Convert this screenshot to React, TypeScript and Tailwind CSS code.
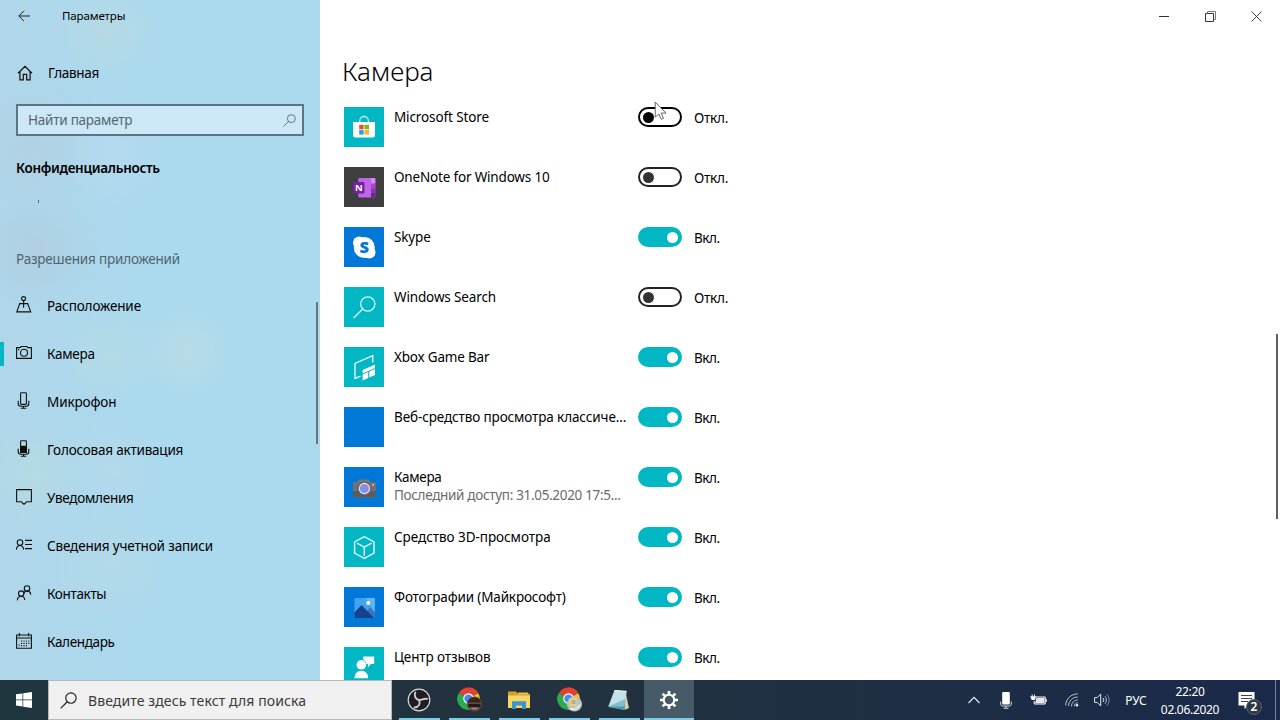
import type { ReactNode } from "react";

const HomeIcon = () => (
  <svg width="16" height="16" viewBox="0 0 16 16" fill="none" stroke="#111" strokeWidth="1.2">
    <path d="M1 8.2 8 1.4l7 6.8M2.9 6.6v8.2h3.4V9.4h3.4v5.4h3.4V6.6" />
  </svg>
);

const SearchIcon = ({ size = 13, color = "#4c5d66", width = 1 }: { size?: number; color?: string; width?: number }) => (
  <svg width={size} height={size} viewBox="0 0 16 16" fill="none" stroke={color} strokeWidth={width}>
    <circle cx="10.3" cy="5.7" r="4.9" />
    <path d="M6.8 9.2.6 15.4" />
  </svg>
);

const LocationIcon = () => (
  <svg width="16" height="17" viewBox="0 0 16 17" fill="none" stroke="#111" strokeWidth="1.1">
    <circle cx="7.6" cy="2.6" r="2" />
    <path d="M7.6 4.6v7.200M5.200 7.600H3.700L.8 15.900h13.900l-3-8.300h-1.600M4.500 7.600h6.200" />
  </svg>
);

const CameraIcon = () => (
  <svg width="16" height="16" viewBox="0 0 16 16" fill="none" stroke="#111" strokeWidth="1.1">
    <path d="M.6 2.600h3.500L5.200 1.500h5.600l1.100 1.100h3.500v10.800H.6z" />
    <circle cx="8" cy="7.800" r="3.500" />
    <path d="M2 4.600h1.200" />
  </svg>
);

const MicIcon = ({ filled = false }: { filled?: boolean }) => (
  <svg width="16" height="17" viewBox="0 0 16 17" fill="none" stroke="#111" strokeWidth="1.1">
    <rect x="4.600" y=".8" width="5.800" height="11.600" rx=".8" />
    {filled && <path d="M4.600 6.400h5.800v6H4.600z" fill="#111" />}
    <path d="M2.200 8.800v2.800c0 1.700 1 2.700 2.700 2.700h5.200c1.700 0 2.700-1 2.700-2.700V8.800M7.500 14.300v2M4.800 16.300h5.400" />
  </svg>
);

const NoticeIcon = () => (
  <svg width="16" height="16" viewBox="0 0 16 16" fill="none" stroke="#111" strokeWidth="1.1">
    <path d="M.6.6h14.800v12.200h-4.600L8 15.200l-2.800-2.400H.6z" />
  </svg>
);

const AccountIcon = () => (
  <svg width="16" height="12" viewBox="0 0 16 12" fill="none" stroke="#111" strokeWidth="1.1">
    <circle cx="4" cy="3.600" r="2.800" />
    <path d="M.4 10.600C.6 8 2 6.500 4 6.500s3.400 1.500 3.600 4.100M9 1.400h7M9 5.500h7M9 9.600h7" />
  </svg>
);

const ContactsIcon = () => (
  <svg width="16" height="16" viewBox="0 0 16 16" fill="none" stroke="#111" strokeWidth="1.1">
    <circle cx="11" cy="3.400" r="2.700" />
    <path d="M7.600 8.600C8.200 7 9.400 6.100 11 6.100c2.200 0 3.600 1.400 3.800 3.700" />
    <circle cx="5.200" cy="8.600" r="2.700" />
    <path d="M1.300 15.400c.2-2.700 1.700-4.100 3.900-4.100 2 0 3.200 1.300 3.600 3.700" />
  </svg>
);

const CalendarIcon = () => (
  <svg width="16" height="16" viewBox="0 0 16 16" fill="none" stroke="#111" strokeWidth="1.1">
    <path d="M.6 2h14.800v13.200H.6zM.6 5h14.800M3.400 0v3.200M12.600 0v3.200" />
    <path d="M3.200 11.200v2.600M5.600 7.400v6.400M8 7.400v6.400M10.400 7.400v6.400M12.800 7.400v4" strokeDasharray="1.2 1.1" />
  </svg>
);

type NavItem = { label: string; icon: ReactNode; active?: boolean; tracking: string };

const nav: NavItem[] = [
  { label: "Расположение", icon: <LocationIcon />, tracking: "tracking-[-0.12px]" },
  { label: "Камера", icon: <CameraIcon />, active: true, tracking: "tracking-[-0.28px]" },
  { label: "Микрофон", icon: <MicIcon />, tracking: "tracking-[-0.11px]" },
  { label: "Голосовая активация", icon: <MicIcon filled />, tracking: "tracking-[-0.21px]" },
  { label: "Уведомления", icon: <NoticeIcon />, tracking: "tracking-[-0.26px]" },
  { label: "Сведения учетной записи", icon: <AccountIcon />, tracking: "tracking-[-0.15px]" },
  { label: "Контакты", icon: <ContactsIcon />, tracking: "tracking-[-0.34px]" },
  { label: "Календарь", icon: <CalendarIcon />, tracking: "tracking-[-0.35px]" },
];

const StoreTile = () => (
  <svg width="40" height="40" viewBox="0 0 40 40">
    <path d="M15.800 16v-2.200a4.200 4.200 0 0 1 8.600 0V16" fill="none" stroke="#b5eaef" strokeWidth="1.300" />
    <path d="M9 15h22v13.600a2 2 0 0 1-2 2H11a2 2 0 0 1-2-2z" fill="#fff" />
    <path d="M15.200 17.800h4.500v4.500h-4.500z" fill="#e8532a" />
    <path d="M20.500 17.800H25v4.500h-4.500z" fill="#7fb51c" />
    <path d="M15.200 23.100h4.500v4.500h-4.500z" fill="#1ba1e8" />
    <path d="M20.500 23.100H25v4.500h-4.500z" fill="#f7b61b" />
  </svg>
);

const OneNoteTile = () => (
  <svg width="40" height="40" viewBox="0 0 40 40">
    <rect x="14.300" y="11" width="17" height="19.500" rx="1.200" fill="#c065e6" />
    <path d="M27 11h3.300a1 1 0 0 1 1 1v4.500H27z" fill="#d68af0" />
    <path d="M27 16.500h4.300v5H27z" fill="#a444cf" />
    <path d="M27 21.500h4.300v4.500H27z" fill="#8b35b8" />
    <path d="M27 26h4.300v3.500a1 1 0 0 1-1 1H27z" fill="#6c2499" />
    <rect x="9" y="15" width="11.500" height="11.500" rx="1" fill="#7520a5" />
    <text x="14.800" y="24.300" textAnchor="middle" fontSize="9.500" fontWeight="700" fontFamily="Open Sans, sans-serif" fill="#fff">N</text>
  </svg>
);

const SkypeTile = () => (
  <svg width="40" height="40" viewBox="0 0 40 40">
    <circle cx="15.200" cy="15.700" r="6.200" fill="#fff" />
    <circle cx="25.300" cy="25.300" r="6.200" fill="#fff" />
    <circle cx="20.300" cy="20.500" r="10.500" fill="#fff" />
    <text x="20.300" y="26.300" textAnchor="middle" fontSize="16.500" fontWeight="800" fontFamily="Open Sans, sans-serif" fill="#0078d7">S</text>
  </svg>
);

const FindTile = () => (
  <svg width="40" height="40" viewBox="0 0 40 40" fill="none" stroke="#d9f5f7" strokeWidth="1.300">
    <circle cx="23.800" cy="17" r="7.100" />
    <path d="M18.700 22 9.600 31" />
  </svg>
);

const GameBarTile = () => (
  <svg width="40" height="40" viewBox="0 0 40 40">
    <path d="M16.500 29.200 11 31.500V16.400L28.800 8.600v6.800" fill="none" stroke="#e4f8fa" strokeWidth="1.400" />
    <path d="M18.600 23 31 17.600v3.400l-12.400 5.400z" fill="#fff" />
    <path d="M18.600 27.400l5.600-2.400v6l-5.600 2.400zM25.300 24.600l5.700-2.500v6l-5.700 2.500z" fill="#fff" />
  </svg>
);

const CameraTile = () => (
  <svg width="40" height="40" viewBox="0 0 40 40">
    <path d="M15 12.500h10l1.500 3h-13z" fill="#74767b" />
    <rect x="9" y="15" width="23" height="15.500" rx="1.200" fill="#707277" />
    <path d="M9 24h23v5.300a1.200 1.200 0 0 1-1.200 1.200H10.200A1.200 1.200 0 0 1 9 29.300z" fill="#5a5c61" />
    <circle cx="20.400" cy="21.500" r="7" fill="#606267" />
    <circle cx="20.400" cy="21.500" r="5.700" fill="#e5e3ee" />
    <circle cx="20.400" cy="21.500" r="4.500" fill="#9a83d8" />
    <circle cx="18.900" cy="22.500" r="2.400" fill="#58a5ea" />
    <path d="M28.200 17h1.600v1.500h-1.600z" fill="#d9d9dc" />
  </svg>
);

const CubeTile = () => (
  <svg width="40" height="40" viewBox="0 0 40 40" fill="none" stroke="#d9f5f7" strokeWidth="1.500" strokeLinejoin="round">
    <path d="m20.300 9.600 9.700 5.200v11.400l-9.700 5.200-9.700-5.200V14.800zM13 16.200l7.300 3.900v8.700M20.300 20.100l7.300-3.900" />
  </svg>
);

const PhotosTile = () => (
  <svg width="40" height="40" viewBox="0 0 40 40">
    <path d="M10.500 11h20.300v20H10.500z" fill="#41a4ee" />
    <path d="M22 11h8.800v14z" fill="#5eb6f5" />
    <path d="m20.500 27 5.500-6.500 4.800 5V31H20.500z" fill="#3874c4" />
    <path d="M10.500 25.500 17.500 18 30 31H10.500z" fill="#17418c" />
    <circle cx="24.200" cy="16" r="2" fill="#fff" />
  </svg>
);

const FeedbackTile = () => (
  <svg width="40" height="40" viewBox="0 0 40 40" fill="#fff">
    <circle cx="17.300" cy="17.800" r="4.800" />
    <path d="M19.300 9.500h10.900v7.600h-3.300l-3 3.200v-3.200h-1.500c-.4-2.100-1.500-3.500-3.100-4.300z" />
    <path d="M10.500 31.200c.3-4.700 2.500-7.500 6.800-7.500s6.600 2.800 6.900 7.500z" />
  </svg>
);

type AppRow = { name: string; on: boolean; tile: string; icon?: ReactNode; sub?: string; hover?: boolean; tracking: string };

const apps: AppRow[] = [
  { name: "Microsoft Store", on: false, tile: "bg-[#00b7c3]", icon: <StoreTile />, hover: true, tracking: "tracking-[-0.12px]" },
  { name: "OneNote for Windows 10", on: false, tile: "bg-[#3f3f41]", icon: <OneNoteTile />, tracking: "tracking-[-0.18px]" },
  { name: "Skype", on: true, tile: "bg-[#0078d7]", icon: <SkypeTile />, tracking: "tracking-[-0.15px]" },
  { name: "Windows Search", on: false, tile: "bg-[#00b7c3]", icon: <FindTile />, tracking: "tracking-[-0.14px]" },
  { name: "Xbox Game Bar", on: true, tile: "bg-[#00b7c3]", icon: <GameBarTile />, tracking: "tracking-[-0.19px]" },
  { name: "Веб-средство просмотра классиче...", on: true, tile: "bg-[#0078d7]", tracking: "tracking-[-0.12px]" },
  { name: "Камера", on: true, tile: "bg-[#0078d7]", icon: <CameraTile />, sub: "Последний доступ: 31.05.2020 17:5...", tracking: "tracking-[-0.3px]" },
  { name: "Средство 3D-просмотра", on: true, tile: "bg-[#00b7c3]", icon: <CubeTile />, tracking: "tracking-[-0.05px]" },
  { name: "Фотографии (Майкрософт)", on: true, tile: "bg-[#0078d7]", icon: <PhotosTile />, tracking: "tracking-[-0.15px]" },
  { name: "Центр отзывов", on: true, tile: "bg-[#00b7c3]", icon: <FeedbackTile />, tracking: "tracking-[-0.12px]" },
];

const Toggle = ({ on, hover }: { on: boolean; hover?: boolean }) =>
  on ? (
    <div className="flex h-5 w-11 items-center justify-end rounded-full bg-[#00b7c3] pr-1">
      <div className="size-[11px] rounded-full bg-white" />
    </div>
  ) : (
    <div className={`flex h-5 w-11 items-center rounded-full border-2 pl-[3px] ${hover ? "border-black" : "border-[#222]"}`}>
      <div className={`size-[11px] rounded-full ${hover ? "bg-black" : "bg-[#333]"}`} />
    </div>
  );

const Sidebar = () => (
  <aside className="flex w-80 flex-col bg-[#abd9ee] bg-[radial-gradient(circle_at_110px_30px,#bddbde99_0,#bddbde00_50px),radial-gradient(circle_at_187px_352px,#bedde3b3_0,#bedde300_48px),radial-gradient(circle_at_112px_355px,#b8dde099_0,#b8dde000_50px),radial-gradient(circle_at_38px_250px,#b0c8d880_0,#b0c8d800_60px),radial-gradient(circle_at_35px_150px,#b3cddd80_0,#b3cddd00_65px),radial-gradient(circle_at_115px_150px,#badbf099_0,#badbf000_60px),radial-gradient(circle_at_35px_475px,#b9dddf99_0,#b9dddf00_50px),radial-gradient(circle_at_115px_565px,#b7dbe599_0,#b7dbe500_60px),radial-gradient(circle_at_115px_470px,#b9dbe999_0,#b9dbe900_50px),linear-gradient(to_right,#b0d6e9_0,#abd9ee_45%)]">
    <div className="flex h-8 items-center pl-[18px]">
      <svg width="12" height="12" viewBox="0 0 12 12" fill="none" stroke="#222" strokeWidth="1">
        <path d="M12 6H.8M6 .8.8 6 6 11.200" />
      </svg>
      <span className="ml-8 text-[11.5px] leading-4 tracking-[-0.12px]">Параметры</span>
    </div>
    <div className="mt-[25px] flex h-8 items-center pl-[17px]">
      <HomeIcon />
      <span className="ml-[15px] text-[13.5px] leading-5 tracking-[-0.3px]">Главная</span>
    </div>
    <div className="mx-4 mt-[15px] flex h-8 w-72 items-center justify-between border-2 border-[#5b7582] bg-[#cce8f7] pr-1.5 pl-[10px]">
      <span className="text-[13.5px] leading-5 tracking-[-0.24px] text-[#546670]">Найти параметр</span>
      <SearchIcon />
    </div>
    <h2 className="mt-[22px] ml-4 text-[13.5px] leading-5 font-semibold tracking-[-0.3px]">Конфиденциальность</h2>
    <div className="mt-[22px] ml-[38px] h-[3px] w-px bg-[#4d6b80]" />
    <h3 className="mt-[46px] ml-4 text-[13.5px] leading-5 tracking-[-0.19px] text-[#50656f]">Разрешения приложений</h3>
    <div className="mt-[13px] flex">
      <nav className="flex-1">
        {nav.map((n) => (
          <div key={n.label} className="flex h-12 items-center">
            <div className={`h-6 w-1 ${n.active ? "bg-[#00b7c3]" : ""}`} />
            <div className="ml-3 flex w-4 justify-center pb-[3px]">{n.icon}</div>
            <span className={`ml-[15px] text-[13.5px] leading-5 whitespace-nowrap ${n.tracking}`}>{n.label}</span>
          </div>
        ))}
      </nav>
      <div className="mt-5 mr-0.5 h-[142px] w-0.5 bg-[#66767f]" />
    </div>
  </aside>
);

const WindowButtons = () => (
  <div className="flex h-8 shrink-0 justify-end pr-px">
    <div className="flex w-[46px] items-center justify-center">
      <div className="h-px w-2.5 bg-[#333]" />
    </div>
    <div className="flex w-[46px] items-center justify-center">
      <svg width="11" height="11" viewBox="0 0 11 11" fill="none" stroke="#333">
        <path d="M.5 2.500h8v8h-8z" />
        <path d="M2.500 2.500v-2h8v8h-2" stroke="#777" />
      </svg>
    </div>
    <div className="flex w-[46px] items-center justify-center">
      <svg width="11" height="11" viewBox="0 0 11 11" fill="none" stroke="#444">
        <path d="m.5.500 10 10m0-10-10 10" />
      </svg>
    </div>
  </div>
);

const Main = () => (
  <main className="flex min-w-0 flex-1 flex-col bg-white">
    <WindowButtons />
    <div className="flex flex-1 justify-between">
      <div className="pl-6">
        <h1 className="mt-[21px] -ml-0.5 text-[26px] leading-9 font-light">Камера</h1>
        <ul className="mt-[18px]">
          {apps.map((a) => (
            <li key={a.name} className="flex h-[60px] items-start">
              <div className={`size-10 ${a.tile}`}>{a.icon}</div>
              <div className="ml-2.5 w-[244px] whitespace-nowrap">
                <div className={`text-[13.5px] leading-5 ${a.tracking}`}>{a.name}</div>
                {a.sub && <div className="-mt-0.5 text-[13.5px] leading-5 tracking-[-0.32px] text-[#6b6b6b]">{a.sub}</div>}
              </div>
              <Toggle on={a.on} hover={a.hover} />
              <span className={`ml-3 pt-px text-[13.5px] leading-5 ${a.on ? "tracking-[-0.45px]" : "tracking-[-0.24px]"}`}>{a.on ? "Вкл." : "Откл."}</span>
            </li>
          ))}
        </ul>
      </div>
      <div className="mt-[302px] mr-0.5 h-[185px] w-0.5 bg-[#606060]" />
    </div>
  </main>
);

const Chrome = ({ children }: { children: ReactNode }) => (
  <svg width="26" height="28" viewBox="0 0 26 28" overflow="visible">
    <path d="M12.500 12.500 2.800 7A11.200 11.200 0 0 1 22.300 7.200z" fill="#e34133" />
    <path d="M12.500 12.500 22.300 7.200A11.200 11.200 0 0 1 12.500 24z" fill="#fbc116" />
    <path d="M12.500 12.500 12.500 24A11.200 11.200 0 0 1 2.800 7z" fill="#2da94f" />
    <path d="M12.500 7.200h9.800a11 11 0 0 0-9.800-5.800z" fill="#e34133" />
    <circle cx="12.500" cy="12.600" r="5.300" fill="#fff" />
    <circle cx="12.500" cy="12.600" r="4.200" fill="#4688f1" />
    {children}
  </svg>
);

const ObsIcon = () => (
  <svg width="24" height="24" viewBox="0 0 24 24">
    <circle cx="12" cy="12" r="10.800" fill="#1f1d22" stroke="#d5d7d9" strokeWidth="1.200" />
    <g fill="none" stroke="#c9cbce" strokeWidth="1.900" strokeLinecap="round">
      <path d="M8.300 4.500c-1.400 3.600.2 6.600 3.700 7.500" />
      <path d="M20.300 10.900c-3.800-.600-6.500 1.300-8.300 1.100" />
      <path d="M7.500 19.500c4.400-.300 6.100-3.600 4.500-7.500" />
    </g>
  </svg>
);

const FolderIcon = () => (
  <svg width="24" height="20" viewBox="0 0 24 20">
    <path d="M1 1.500h8l1.800 2H22a1 1 0 0 1 1 1V8H1z" fill="#d99f24" />
    <path d="M1 5.500h22V18H1z" fill="#f9d566" />
    <path d="M11 2.500h10v2H11z" fill="#e9bd50" />
    <path d="M5 11.200h14V19h-4v-3.500H9V19H5z" fill="#3b93cf" />
  </svg>
);

const NotepadIcon = () => (
  <svg width="24" height="24" viewBox="0 0 24 24">
    <path d="M18.500 3.500 22 20l-4.500 2z" fill="#d8cda6" />
    <path d="m7.500 2.500 12 .8-2.200 18.600L1 18.700z" fill="#81bdca" />
    <path d="m7.500 2.500 12 .8-.9 7.700L2 18z" fill="#c2e2e8" />
    <path d="M1 18.700 17.300 21.900l.4-3.500z" fill="#4f97a8" />
    <path d="m7.500 2.500 12 .8" stroke="#eff5f5" strokeWidth="1.200" />
  </svg>
);

const GearIcon = () => (
  <svg width="20" height="20" viewBox="0 0 20 20" fill="none" stroke="#fff">
    <circle cx="10" cy="10" r="5.300" strokeWidth="2.100" />
    <path d="M10 4.200V1M10 19v-3.200M4.200 10H1M19 10h-3.200M5.900 5.900 3.600 3.600M16.400 16.400l-2.300-2.300M5.900 14.100l-2.300 2.300M16.400 3.600l-2.300 2.300" strokeWidth="2.700" />
  </svg>
);

const taskApps: { id: string; icon: ReactNode; active?: boolean }[] = [
  { id: "obs", icon: <ObsIcon /> },
  {
    id: "chrome-1",
    icon: (
      <Chrome>
        <circle cx="18.500" cy="18" r="7.600" fill="#62473a" />
        <path d="M11.500 16.500a7.500 7.500 0 0 1 14 0z" fill="#35271f" />
        <path d="M12.500 18h12v3h-12z" fill="#211c1b" />
        <path d="M15.500 22.500h6" stroke="#b58e72" strokeWidth="1.500" />
      </Chrome>
    ),
  },
  { id: "explorer", icon: <FolderIcon /> },
  {
    id: "chrome-2",
    icon: (
      <Chrome>
        <circle cx="18.500" cy="18" r="7.600" fill="#b9c0c3" />
        <path d="M13.500 12h7v8h-7z" fill="#e7d271" />
        <path d="M15.500 14h4v4h-4z" fill="#a8adb0" />
        <path d="M14 22.500c4 1.500 8 0 10-4" stroke="#e2e6e8" strokeWidth="2" fill="none" />
      </Chrome>
    ),
  },
  { id: "notepad", icon: <NotepadIcon /> },
  { id: "settings", icon: <GearIcon />, active: true },
];

const Taskbar = () => (
  <footer className="flex h-10 bg-linear-to-r from-[#20363f] via-[#22323f] via-45% to-[#1a294a] text-white">
    <div className="flex w-12 items-center justify-center">
      <svg width="16" height="16" viewBox="0 0 16 16" fill="#fff">
        <path d="M0 2.300 6.500 1.400v6.200H0zM7.200 1.300 16 0v7.600H7.200zM0 8.300h6.500v6.200L0 13.600zM7.200 8.300H16V16l-8.800-1.300z" />
      </svg>
    </div>
    <div className="flex w-[344px] items-center border border-[#b5b5b5] bg-[#f0f0f0] pl-[11px]">
      <SearchIcon size={17} color="#222" width={1.1} />
      <span className="ml-[11px] pt-px text-[14px] tracking-[0.1px] text-[#3b3b3b]">Введите здесь текст для поиска</span>
    </div>
    <div className="ml-0.5 flex">
      {taskApps.map((t) => (
        <div key={t.id} className={`flex w-[50px] flex-col items-center ${t.active ? "bg-[#465b67]" : ""}`}>
          <div className="flex h-[37.500px] items-center justify-center pt-0.5">{t.icon}</div>
          <div className={`h-[2.500px] bg-[#76cfe6] ${t.active ? "w-full" : "w-[41px]"}`} />
        </div>
      ))}
    </div>
    <div className="ml-auto flex items-center">
      <div className="flex w-8 justify-center">
        <svg width="12" height="8" viewBox="0 0 12 8" fill="none" stroke="#e6e9ee" strokeWidth="1.200"><path d="M.5 7 6 1.400 11.500 7" /></svg>
      </div>
      <div className="flex w-8 justify-center">
        <svg width="12" height="17" viewBox="0 0 12 17" fill="#fff"><rect x="2.200" y="0" width="7.600" height="12.500" rx="1" /><path d="M.7 9.500v2.500c0 1.200.8 2 2 2h6.600c1.200 0 2-.8 2-2V9.500M6 14v2M3.500 16.300h5" fill="none" stroke="#fff" strokeWidth=".8" /></svg>
      </div>
      <div className="flex w-[33px] justify-center pb-0.5">
        <svg width="17" height="11" viewBox="0 0 17 11"><path d="M6 3h9.200v7H4.200V7" fill="none" stroke="#fff" /><path d="M6.500 4h8v5.300H5z" fill="#e4e8ef" /><path d="M15.500 5h1.200v3h-1.200z" fill="#fff" /><path d="M1 2.700h4.600v1.500c0 1.200-.9 1.900-2.300 1.900S1 5.400 1 4.200z" fill="#fff" /><path d="M2.200 3V.5M4.500 3V.5M.2 2.800h6" stroke="#fff" strokeWidth=".9" /></svg>
      </div>
      <div className="flex w-[34px] justify-center">
        <svg width="14" height="14" viewBox="0 0 14 14" fill="none" stroke="#b9c0cc"><path d="M.7 12.500C.7 6 6 .9 12.800.9M3.500 13c0-5 4.200-9 9.300-9M6.500 13.300c0-3.600 2.900-6.300 6.300-6.300M9.300 13.300c0-2 1.500-3.500 3.500-3.500" /><circle cx="12" cy="12.300" r="1.200" fill="#fff" stroke="none" /></svg>
      </div>
      <div className="flex w-[26px] justify-center">
        <svg width="16" height="14" viewBox="0 0 16 14" fill="none" stroke="#e0e4ea"><path d="M.6 4.600h2.500L6.700 1v12L3.100 9.400H.6z" /><path d="M9 5a3 3 0 0 1 0 4" /><path d="M11 3.300a5.500 5.500 0 0 1 0 7.400" opacity=".75" /><path d="M13 1.500a8 8 0 0 1 0 11" opacity=".5" /></svg>
      </div>
      <div className="w-[42px] pt-px text-center text-[12px] tracking-[-0.1px]">РУС</div>
      <div className="flex w-[66px] flex-col items-center pt-0.5 text-[12px] leading-[18px] tracking-[-0.300px]">
        <span>22:20</span>
        <span>02.06.2020</span>
      </div>
      <div className="flex w-[52px] pt-[3px] pl-[14px]">
        <div className="relative">
          <svg width="26" height="24" viewBox="0 0 26 24"><path d="M1.500 2h16v13.500H11L7.500 19v-3.500h-6z" fill="#fff" /><path d="M4 5.500h11M4 8.500h11M4 11.500h7" stroke="#34435c" /></svg>
          <div className="absolute top-[9px] left-[9px] flex size-4 items-center justify-center rounded-full border border-[#596273] bg-[#303744] text-[12px] font-semibold">2</div>
        </div>
      </div>
      <div className="mr-1 h-10 w-px bg-[#73809a]" />
    </div>
  </footer>
);

export default function App() {
  return (
    <div className="relative flex h-[720px] w-[1280px] flex-col overflow-hidden bg-white font-['Noto_Sans','Open_Sans',sans-serif] text-black">
      <div className="flex h-[680px] overflow-hidden">
        <Sidebar />
        <Main />
      </div>
      <Taskbar />
      <svg className="absolute top-[101px] left-[654px]" width="14" height="20" viewBox="0 0 14 20">
        <path d="M1.200 1v15.200l3.600-3.200 2.500 5.300 2.200-1-2.400-5.200h4.900z" fill="#fff" stroke="#555" strokeWidth=".9" />
      </svg>
    </div>
  );
}
